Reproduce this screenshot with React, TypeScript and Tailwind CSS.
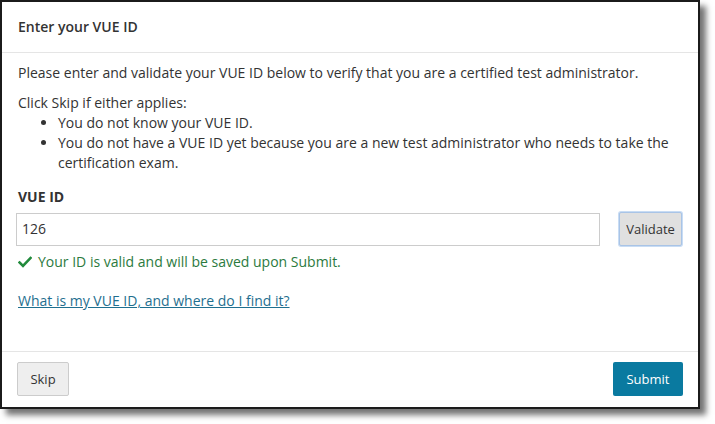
import React from 'react'

const font = { fontFamily: '"Open Sans", "Noto Sans", sans-serif' }

function Check() {
  return (
    <svg width="14" height="12" viewBox="0 0 14 12" className="shrink-0">
      <path d="M1.5 6.5 L5 10 L12.5 2" fill="none" stroke="#218a3c" strokeWidth="2.6" strokeLinecap="square" />
    </svg>
  )
}

export default function App() {
  return (
    <div className="w-[715px] h-[424px] bg-white" style={font}>
      <div className="w-[700px] h-[409px] border-2 border-[#1b1b1b] bg-white flex flex-col text-[14px] leading-5 text-[#333] shadow-[6px_6px_6px_rgba(0,0,0,0.55)]">
        <div className="px-4 pt-[15px] pb-[15px] border-b border-[#e5e5e5] font-semibold">Enter your VUE ID</div>

        <div className="flex-1 px-4 pt-[10px]">
          <p>Please enter and validate your VUE ID below to verify that you are a certified test administrator.</p>
          <p className="mt-[10px]">Click Skip if either applies:</p>
          <ul className="list-disc pl-10">
            <li>You do not know your VUE ID.</li>
            <li>You do not have a VUE ID yet because you are a new test administrator who needs to take the certification exam.</li>
          </ul>

          <div className="mt-[14px] font-bold">VUE ID</div>
          <div className="mt-[5px] -ml-0.5 flex items-center">
            <div className="w-[586px] h-[33px] border border-[#cccccc] px-[5px] flex items-center">126</div>
            <button className="ml-[19px] w-[63px] h-[34px] bg-[#e0e0e0] border border-[#a9c4e6] rounded-[2px] ring-1 ring-[#c8dcf4] text-[13px]">
              Validate
            </button>
          </div>
          <div className="mt-[6px] flex items-center gap-[6px] text-[#2b7a3e]">
            <Check />
            <span>Your ID is valid and will be saved upon Submit.</span>
          </div>
          <a className="block mt-[19px] text-[#1f6f8f] underline w-fit">What is my VUE ID, and where do I find it?</a>
        </div>

        <div className="border-t border-[#e5e5e5] h-[56px] pl-[15px] pr-[15px] pt-[10px] flex justify-between items-start">
          <button className="w-[52px] h-[34px] bg-[#eeeeee] border border-[#cccccc] rounded-[2px] text-[13px]">Skip</button>
          <button className="w-[70px] h-[34px] bg-[#0a7aa0] text-white rounded-[2px] text-[13px]">Submit</button>
        </div>
      </div>
    </div>
  )
}
